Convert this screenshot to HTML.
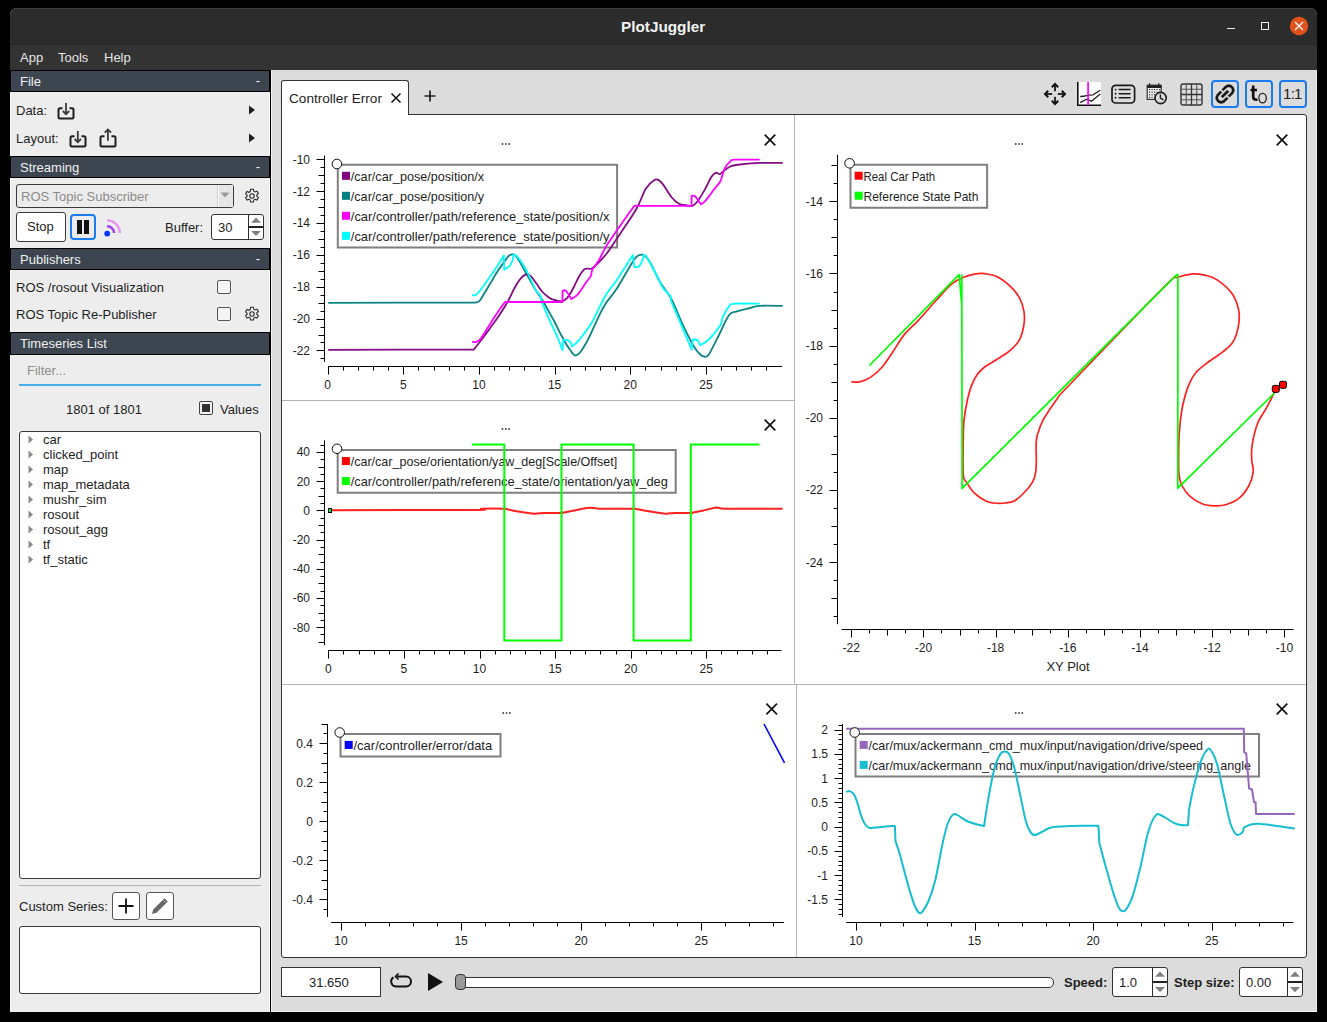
<!DOCTYPE html>
<html><head><meta charset="utf-8">
<style>
html,body{margin:0;padding:0}
body{width:1327px;height:1022px;background:#000;position:relative;overflow:hidden;font-family:"Liberation Sans",sans-serif;font-size:13px;color:#1e1e1e}
.a{position:absolute;white-space:pre}
.hdr{position:absolute;left:10px;width:258px;height:20px;background:#3d4650;border:1px solid #000;color:#f0f0f0;font-size:13px}
.hdr span{position:absolute;left:9px;top:3px}
.hdr b{position:absolute;right:9px;top:2px;font-weight:normal}
.box{position:absolute;background:#fff;border:1px solid #3a3a3a;border-radius:3px;box-sizing:border-box}
.pane{position:absolute;background:#fff;box-sizing:border-box}
</style></head><body>
<!-- window -->
<div class="a" style="left:10px;top:8px;width:1307px;height:1004px;background:#dcdcdc;border-radius:7px 7px 0 0;overflow:hidden">
  <div class="a" style="left:0;top:0;width:1307px;height:37px;background:#2c2c2c;border-top:1px solid #3f3f3f;box-sizing:border-box"></div>
  <div class="a" style="left:0;top:37px;width:1307px;height:25px;background:#333"></div>
  <div class="a" style="left:0;top:36px;width:1307px;height:1px;background:#262626"></div>
  <div class="a" style="left:1306px;top:62px;width:1px;height:942px;background:#ececec"></div>
  <div class="a" style="left:0;top:1003px;width:1307px;height:1px;background:#f4f4f4"></div>
</div>
<!-- title -->
<div class="a" style="left:621px;top:18px;font-size:15.3px;font-weight:bold;color:#f2f2f2">PlotJuggler</div>
<div class="a" style="left:1227px;top:28px;width:8px;height:1.2px;background:#eee"></div>
<div class="a" style="left:1261px;top:22px;width:8px;height:8px;border:1.2px solid #f0f0f0;box-sizing:border-box"></div>
<svg class="a" style="left:1289px;top:16px" width="20" height="20"><circle cx="10" cy="10" r="9.2" fill="#e0521c"/><path d="M6 6L14 14M14 6L6 14" stroke="#fff" stroke-width="1.3"/></svg>
<!-- menu -->
<div class="a" style="left:20px;top:50px;color:#e6e6e6">App</div>
<div class="a" style="left:58px;top:50px;color:#e6e6e6">Tools</div>
<div class="a" style="left:104px;top:50px;color:#e6e6e6">Help</div>

<!-- left panel -->
<div class="a" style="left:10px;top:70px;width:260px;height:942px;background:#ededed"></div>
<div class="a" style="left:10px;top:70px;width:1px;height:942px;background:#fafafa"></div>
<div class="a" style="left:269px;top:70px;width:1px;height:942px;background:#fafafa"></div>
<div class="a" style="left:270px;top:70px;width:1px;height:942px;background:#000"></div>
<div class="a" style="left:271px;top:70px;width:1px;height:942px;background:#f0f0f0"></div>

<div class="hdr" style="top:70px"><span>File</span><b>-</b></div>
<div class="hdr" style="top:156px"><span>Streaming</span><b>-</b></div>
<div class="hdr" style="top:248px"><span>Publishers</span><b>-</b></div>
<div class="hdr" style="top:332px;height:21px"><span>Timeseries List</span></div>


<!-- File section -->
<div class="a" style="left:16px;top:103px">Data:</div>
<svg class="a" style="left:56px;top:102px" width="20" height="20"><path d="M6.5 6.2H4Q2.5 6.2 2.5 7.7V15.1Q2.5 16.6 4 16.6H16Q17.5 16.6 17.5 15.1V7.7Q17.5 6.2 16 6.2H13.5" fill="none" stroke="#1e1e1e" stroke-width="2"/><path d="M10 1V12.2M6.8 9L10 12.2L13.2 9" fill="none" stroke="#3a3a3a" stroke-width="1.8"/></svg>
<svg class="a" style="left:248px;top:105px" width="8" height="10"><path d="M1 0.5L7 5L1 9.5Z" fill="#1e1e1e"/></svg>
<div class="a" style="left:16px;top:131px">Layout:</div>
<svg class="a" style="left:68px;top:130px" width="20" height="20"><path d="M6.5 6.2H4Q2.5 6.2 2.5 7.7V15.1Q2.5 16.6 4 16.6H16Q17.5 16.6 17.5 15.1V7.7Q17.5 6.2 16 6.2H13.5" fill="none" stroke="#1e1e1e" stroke-width="2"/><path d="M9.8 1V12.2M6.6 9L9.8 12.2L13 9" fill="none" stroke="#3a3a3a" stroke-width="1.8"/></svg>
<svg class="a" style="left:98px;top:128px" width="20" height="21"><path d="M6.5 8.2H4Q2.5 8.2 2.5 9.7V17.1Q2.5 18.6 4 18.6H16Q17.5 18.6 17.5 17.1V9.7Q17.5 8.2 16 8.2H13.5" fill="none" stroke="#1e1e1e" stroke-width="2"/><path d="M9.9 12.7V1.6M6.7 4.6L9.9 1.4L13.1 4.6" fill="none" stroke="#3a3a3a" stroke-width="1.8"/></svg>
<svg class="a" style="left:248px;top:133px" width="8" height="10"><path d="M1 0.5L7 5L1 9.5Z" fill="#1e1e1e"/></svg>

<!-- Streaming section -->
<div class="a" style="left:16px;top:184px;width:218px;height:24px;background:#ececec;border:1px solid #3a3a3a;border-radius:3px;box-sizing:border-box"></div>
<div class="a" style="left:217px;top:185px;width:1px;height:22px;background:#d0d0d0"></div>
<div class="a" style="left:218px;top:185px;width:15px;height:22px;background:#e6e6e6;border-left:1px solid #fafafa;box-sizing:border-box"></div>
<svg class="a" style="left:220px;top:192px" width="10" height="6"><path d="M0.5 0.5H9.5L5 5.5Z" fill="#9a9a9a"/></svg>
<div class="a" style="left:21px;top:189px;color:#8c8c8c">ROS Topic Subscriber</div>
<svg class="a" style="left:244px;top:188px" width="16" height="16" viewBox="0 0 16 16"><path d="M6.6 1.2h2.8l.4 2 1.3.7 1.9-.8 1.4 2.4-1.5 1.3v1.6l1.5 1.3-1.4 2.4-1.9-.8-1.3.7-.4 2H6.6l-.4-2-1.3-.7-1.9.8-1.4-2.4 1.5-1.3V7.2L1.6 5.9 3 3.5l1.9.8 1.3-.7z" fill="none" stroke="#2a2a2a" stroke-width="1.1"/><circle cx="8" cy="8" r="2.2" fill="none" stroke="#2a2a2a" stroke-width="1.1"/></svg>
<div class="box" style="left:16px;top:212px;width:50px;height:30px"></div>
<div class="a" style="left:27px;top:219px">Stop</div>
<div class="a" style="left:70px;top:214px;width:26px;height:26px;border:2px solid #1a7cf0;border-radius:4px;box-sizing:border-box;background:#ececec"></div>
<div class="a" style="left:77px;top:220px;width:5px;height:14px;background:#111"></div>
<div class="a" style="left:84px;top:220px;width:4.6px;height:14px;background:#111"></div>
<svg class="a" style="left:98px;top:212px" width="28" height="28"><circle cx="9.2" cy="21.6" r="2.9" fill="#0033ff"/><path d="M9.1 14.2A6.9 6.9 0 0 1 16 21.1" fill="none" stroke="#a040e8" stroke-width="2.4"/><path d="M9.1 8.4A12.7 12.7 0 0 1 21.8 21.1" fill="none" stroke="#e890f5" stroke-width="2.4"/></svg>
<div class="a" style="left:165px;top:220px">Buffer:</div>
<div class="box" style="left:211px;top:214px;width:53px;height:26px;border-color:#333"></div>
<div class="a" style="left:248px;top:215px;width:1px;height:24px;background:#2a2a2a"></div>
<div class="a" style="left:249px;top:226px;width:14px;height:1.6px;background:#222"></div>
<svg class="a" style="left:250px;top:215px" width="12" height="24"><path d="M1 7.8H11L6 2.4Z" fill="#808080"/><path d="M1 16H11L6 21.1Z" fill="#808080"/></svg>
<div class="a" style="left:218px;top:220px">30</div>

<!-- Publishers -->
<div class="a" style="left:16px;top:280px">ROS /rosout Visualization</div>
<div class="a" style="left:217px;top:280px;width:14px;height:14px;border:1px solid #555;border-radius:2px;box-sizing:border-box;background:#f4f4f4"></div>
<div class="a" style="left:16px;top:307px">ROS Topic Re-Publisher</div>
<div class="a" style="left:217px;top:307px;width:14px;height:14px;border:1px solid #555;border-radius:2px;box-sizing:border-box;background:#f4f4f4"></div>
<svg class="a" style="left:244px;top:306px" width="16" height="16" viewBox="0 0 16 16"><path d="M6.6 1.2h2.8l.4 2 1.3.7 1.9-.8 1.4 2.4-1.5 1.3v1.6l1.5 1.3-1.4 2.4-1.9-.8-1.3.7-.4 2H6.6l-.4-2-1.3-.7-1.9.8-1.4-2.4 1.5-1.3V7.2L1.6 5.9 3 3.5l1.9.8 1.3-.7z" fill="none" stroke="#2a2a2a" stroke-width="1.1"/><circle cx="8" cy="8" r="2.2" fill="none" stroke="#2a2a2a" stroke-width="1.1"/></svg>

<!-- Timeseries -->
<div class="a" style="left:27px;top:363px;color:#8e8e8e">Filter...</div>
<div class="a" style="left:19px;top:384px;width:242px;height:2px;background:#48aee6"></div>
<div class="a" style="left:66px;top:402px">1801 of 1801</div>
<div class="a" style="left:199px;top:401px;width:14px;height:14px;border:1px solid #444;border-radius:2px;box-sizing:border-box;background:#f4f4f4"></div>
<div class="a" style="left:202px;top:404px;width:8px;height:8px;background:#333"></div>
<div class="a" style="left:220px;top:402px">Values</div>
<div class="box" style="left:19px;top:431px;width:242px;height:448px"></div>
<svg class="a" style="left:28px;top:435px" width="6" height="9"><path d="M0.5 0.5L5 4.5L0.5 8.5Z" fill="#8a8a8a"/></svg><div class="a" style="left:43px;top:432px">car</div>
<svg class="a" style="left:28px;top:450px" width="6" height="9"><path d="M0.5 0.5L5 4.5L0.5 8.5Z" fill="#8a8a8a"/></svg><div class="a" style="left:43px;top:447px">clicked_point</div>
<svg class="a" style="left:28px;top:465px" width="6" height="9"><path d="M0.5 0.5L5 4.5L0.5 8.5Z" fill="#8a8a8a"/></svg><div class="a" style="left:43px;top:462px">map</div>
<svg class="a" style="left:28px;top:480px" width="6" height="9"><path d="M0.5 0.5L5 4.5L0.5 8.5Z" fill="#8a8a8a"/></svg><div class="a" style="left:43px;top:477px">map_metadata</div>
<svg class="a" style="left:28px;top:495px" width="6" height="9"><path d="M0.5 0.5L5 4.5L0.5 8.5Z" fill="#8a8a8a"/></svg><div class="a" style="left:43px;top:492px">mushr_sim</div>
<svg class="a" style="left:28px;top:510px" width="6" height="9"><path d="M0.5 0.5L5 4.5L0.5 8.5Z" fill="#8a8a8a"/></svg><div class="a" style="left:43px;top:507px">rosout</div>
<svg class="a" style="left:28px;top:525px" width="6" height="9"><path d="M0.5 0.5L5 4.5L0.5 8.5Z" fill="#8a8a8a"/></svg><div class="a" style="left:43px;top:522px">rosout_agg</div>
<svg class="a" style="left:28px;top:540px" width="6" height="9"><path d="M0.5 0.5L5 4.5L0.5 8.5Z" fill="#8a8a8a"/></svg><div class="a" style="left:43px;top:537px">tf</div>
<svg class="a" style="left:28px;top:555px" width="6" height="9"><path d="M0.5 0.5L5 4.5L0.5 8.5Z" fill="#8a8a8a"/></svg><div class="a" style="left:43px;top:552px">tf_static</div>

<div class="a" style="left:19px;top:885px;width:242px;height:1px;background:#b4b4b4"></div>
<div class="a" style="left:19px;top:899px">Custom Series:</div>
<div class="box" style="left:112px;top:892px;width:28px;height:28px;border-color:#555"></div>
<svg class="a" style="left:112px;top:892px" width="28" height="28"><path d="M14 6.5V21.5M6.5 14H21.5" stroke="#111" stroke-width="1.8"/></svg>
<div class="box" style="left:146px;top:892px;width:28px;height:28px;border-color:#555"></div>
<svg class="a" style="left:146px;top:892px" width="28" height="28"><path d="M6 22L7.2 17.5L18.5 6.2L21.8 9.5L10.5 20.8Z" fill="#666"/><path d="M17.8 8.5L19.6 10.3" stroke="#fff" stroke-width="0.8"/></svg>
<div class="box" style="left:19px;top:926px;width:242px;height:68px"></div>

<!-- main area: tab -->
<div class="a" style="left:281px;top:80px;width:128px;height:36px;background:#fff;border:1px solid #333;border-bottom:none;border-radius:3px 3px 0 0;box-sizing:border-box"></div>
<div class="a" style="left:289px;top:91px;font-size:13.6px">Controller Error</div>
<svg class="a" style="left:390px;top:92px" width="12" height="12"><path d="M1.5 1.5L10.5 10.5M10.5 1.5L1.5 10.5" stroke="#111" stroke-width="1.5"/></svg>
<svg class="a" style="left:423px;top:89px" width="14" height="14"><path d="M7 1.5V12.5M1.5 7H12.5" stroke="#222" stroke-width="1.7"/></svg>
<!-- pane container -->
<div class="a" style="left:281px;top:114px;width:1026px;height:844px;background:#fff;border:1px solid #333;border-radius:0 3px 3px 3px;box-sizing:border-box"></div>
<div class="a" style="left:282px;top:114px;width:126px;height:1px;background:#fff"></div>
<div class="a" style="left:794px;top:115px;width:1px;height:570px;background:#b4b4b4"></div>
<div class="a" style="left:282px;top:400px;width:512px;height:1px;background:#b4b4b4"></div>
<div class="a" style="left:282px;top:684px;width:1024px;height:1px;background:#b4b4b4"></div>
<div class="a" style="left:796px;top:685px;width:1px;height:272px;background:#b4b4b4"></div>

<!-- toolbar -->
<svg class="a" style="left:1043px;top:82px" width="24" height="24"><path d="M12 3V9.2M12 14.8V21M3 12H9.2M14.8 12H21" stroke="#2a2a2a" stroke-width="2"/><path d="M8.8 5.2L12 2L15.2 5.2M8.8 18.8L12 22L15.2 18.8M5.2 8.8L2 12L5.2 15.2M18.8 8.8L22 12L18.8 15.2" fill="none" stroke="#111" stroke-width="2" stroke-linejoin="miter"/></svg>
<svg class="a" style="left:1077px;top:82px" width="24" height="24"><rect x="0" y="0" width="24" height="24" fill="#fff"/><path d="M0.8 0V23.2H24" fill="none" stroke="#111" stroke-width="1.6"/><path d="M3.2 14.5Q7 14.4 9.5 13.6T16 12.8L23.3 8.3" fill="none" stroke="#222" stroke-width="1.3"/><path d="M3.2 20.6L9.6 17.2L14.5 19.2L23.3 12" fill="none" stroke="#222" stroke-width="1.3"/><path d="M11.1 0V23" stroke="#f0f" stroke-width="1.7"/></svg>
<svg class="a" style="left:1110px;top:84px" width="26" height="21"><rect x="2" y="1.4" width="22.6" height="17.6" rx="3.6" fill="none" stroke="#1a1a1a" stroke-width="1.7"/><circle cx="5.6" cy="5.6" r="0.95" fill="#1a1a1a"/><circle cx="5.6" cy="9.7" r="0.95" fill="#1a1a1a"/><circle cx="5.6" cy="13.8" r="0.95" fill="#1a1a1a"/><path d="M9.2 5.6H20M9.2 9.7H20M9.2 13.8H20" stroke="#1a1a1a" stroke-width="1.5" stroke-linecap="round"/></svg>
<svg class="a" style="left:1146px;top:82px" width="24" height="24"><rect x="1.2" y="3.2" width="14" height="14.2" fill="#f0f0f0" stroke="#222" stroke-width="1.1"/><rect x="1.2" y="3.2" width="14" height="2.8" fill="#222"/><path d="M3.6 1.3V4.6M12.8 1.3V4.6" stroke="#222" stroke-width="1.2"/><g fill="#333"><rect x="3.0" y="7.0" width="1.2" height="1.2"/><rect x="5.5" y="7.0" width="1.2" height="1.2"/><rect x="8.0" y="7.0" width="1.2" height="1.2"/><rect x="10.5" y="7.0" width="1.2" height="1.2"/><rect x="13.0" y="7.0" width="1.2" height="1.2"/><rect x="3.0" y="9.6" width="1.2" height="1.2"/><rect x="5.5" y="9.6" width="1.2" height="1.2"/><rect x="8.0" y="9.6" width="1.2" height="1.2"/><rect x="10.5" y="9.6" width="1.2" height="1.2"/><rect x="13.0" y="9.6" width="1.2" height="1.2"/><rect x="3.0" y="12.200000000000001" width="1.2" height="1.2"/><rect x="5.5" y="12.200000000000001" width="1.2" height="1.2"/><rect x="8.0" y="12.200000000000001" width="1.2" height="1.2"/><rect x="10.5" y="12.200000000000001" width="1.2" height="1.2"/><rect x="13.0" y="12.200000000000001" width="1.2" height="1.2"/><rect x="3.0" y="14.8" width="1.2" height="1.2"/><rect x="5.5" y="14.8" width="1.2" height="1.2"/><rect x="8.0" y="14.8" width="1.2" height="1.2"/><rect x="10.5" y="14.8" width="1.2" height="1.2"/><rect x="13.0" y="14.8" width="1.2" height="1.2"/></g><circle cx="14.6" cy="16" r="5.6" fill="#dcdcdc" stroke="#1a1a1a" stroke-width="1.6"/><path d="M14.4 12.6V16.2L17.4 17.8" fill="none" stroke="#1a1a1a" stroke-width="1.4"/></svg>
<svg class="a" style="left:1180px;top:83px" width="23" height="23"><rect x="1" y="1" width="21" height="21" rx="2" fill="none" stroke="#333" stroke-width="1.4"/><path d="M6.25 1V22M16.75 1V22M1 6.25H22M1 16.75H22" stroke="#555" stroke-width="1.1"/><path d="M11.5 1V22M1 11.5H22" stroke="#333" stroke-width="1.3"/></svg>
<div class="a" style="left:1211px;top:80px;width:28px;height:28px;border:2px solid #1a7cf0;border-radius:4px;box-sizing:border-box"></div>
<svg class="a" style="left:1211px;top:80px" width="28" height="28"><g transform="translate(14 14) rotate(-45) scale(1.08) translate(-12 -12)"><path d="M3.9 12c0-1.71 1.39-3.1 3.1-3.1h4V7H7c-2.76 0-5 2.24-5 5s2.24 5 5 5h4v-1.9H7c-1.71 0-3.1-1.39-3.1-3.1zM8 13h8v-2H8v2zm9-6h-4v1.9h4c1.71 0 3.1 1.39 3.1 3.1s-1.39 3.1-3.1 3.1h-4V17h4c2.76 0 5-2.24 5-5s-2.24-5-5-5z" fill="#111" stroke="#111" stroke-width="0.6"/></g></svg>
<div class="a" style="left:1245px;top:80px;width:28px;height:28px;border:2px solid #1a7cf0;border-radius:4px;box-sizing:border-box"></div>
<svg class="a" style="left:1245px;top:80px" width="28" height="28"><path d="M8.2 5.5V16.5Q8.2 19.8 11.5 19.8H12.5M5.5 10H12" fill="none" stroke="#111" stroke-width="2.6"/><ellipse cx="17.6" cy="18.1" rx="3.7" ry="4.8" fill="none" stroke="#222" stroke-width="1.3"/></svg>
<div class="a" style="left:1279px;top:80px;width:28px;height:28px;border:2px solid #1a7cf0;border-radius:4px;box-sizing:border-box"></div>
<div class="a" style="left:1283px;top:85px;font-size:15px;letter-spacing:-0.7px;color:#222">1:1</div>

<!-- bottom bar -->
<div class="a" style="left:281px;top:967px;width:100px;height:30px;background:#fff;border:1px solid #333;box-sizing:border-box"></div>
<div class="a" style="left:309px;top:975px">31.650</div>
<svg class="a" style="left:389px;top:973px" width="24" height="18"><path d="M8 3.5H17A5 5 0 0 1 17 13.5H7A5 5 0 0 1 4.5 4.3" fill="none" stroke="#111" stroke-width="2"/><path d="M9.5 0.5L6.5 3.5L9.5 6.5" fill="none" stroke="#111" stroke-width="1.6"/></svg>
<svg class="a" style="left:427px;top:972px" width="17" height="20"><path d="M1 1L16 10L1 19Z" fill="#111"/></svg>
<div class="a" style="left:456px;top:977px;width:598px;height:11px;background:#fff;border:1px solid #333;border-radius:5px;box-sizing:border-box"></div>
<div class="a" style="left:455px;top:974px;width:11px;height:16px;background:#9a9a9a;border:1px solid #333;border-radius:4px;box-sizing:border-box"></div>
<div class="a" style="left:1064px;top:975px;font-weight:bold">Speed:</div>
<div class="a" style="left:1112px;top:967px;width:56px;height:30px;background:#fff;border:1px solid #333;border-radius:3px;box-sizing:border-box"></div>
<div class="a" style="left:1152px;top:968px;width:1px;height:28px;background:#2a2a2a"></div>
<div class="a" style="left:1153px;top:981px;width:14px;height:1.8px;background:#222"></div>
<svg class="a" style="left:1153px;top:967px" width="14" height="30"><path d="M2 9.7H12L7 4.4Z" fill="#808080"/><path d="M2 20H12L7 25.2Z" fill="#808080"/></svg>
<div class="a" style="left:1119px;top:975px">1.0</div>
<div class="a" style="left:1174px;top:975px;font-weight:bold">Step size:</div>
<div class="box" style="left:1239px;top:967px;width:64px;height:30px;border-color:#333"></div>
<div class="a" style="left:1287px;top:968px;width:1px;height:28px;background:#2a2a2a"></div>
<div class="a" style="left:1288px;top:981px;width:14px;height:1.8px;background:#222"></div>
<svg class="a" style="left:1288px;top:967px" width="14" height="30"><path d="M2 9.7H12L7 4.4Z" fill="#808080"/><path d="M2 20H12L7 25.2Z" fill="#808080"/></svg>
<div class="a" style="left:1246px;top:975px">0.00</div>
<svg class="a" style="left:0;top:0" width="1327" height="1022" font-family="Liberation Sans">
<g fill="#333"><rect x="501.7" y="143.2" width="1.6" height="1.6"/><rect x="505.0" y="143.2" width="1.6" height="1.6"/><rect x="508.3" y="143.2" width="1.6" height="1.6"/></g>
<path d="M764.7 134.7L775.3 145.3M775.3 134.7L764.7 145.3" stroke="#111" stroke-width="1.7"/>
<path d="M337.8 247.4V164.8H617.1V247.4Z" fill="none" stroke="#7f7f7f" stroke-width="2"/>
<rect x="342.0" y="171.8" width="8" height="8" fill="#800080"/>
<text x="350.8" y="180.8" font-size="12.6" fill="#1e1e1e" textLength="133.3" lengthAdjust="spacingAndGlyphs">/car/car_pose/position/x</text>
<rect x="342.0" y="191.8" width="8" height="8" fill="#008080"/>
<text x="350.8" y="200.8" font-size="12.6" fill="#1e1e1e" textLength="133.3" lengthAdjust="spacingAndGlyphs">/car/car_pose/position/y</text>
<rect x="342.0" y="211.8" width="8" height="8" fill="#ff00ff"/>
<text x="350.8" y="220.8" font-size="12.6" fill="#1e1e1e" textLength="258.7" lengthAdjust="spacingAndGlyphs">/car/controller/path/reference_state/position/x</text>
<rect x="342.0" y="231.8" width="8" height="8" fill="#00ffff"/>
<text x="350.8" y="240.8" font-size="12.6" fill="#1e1e1e" textLength="258.7" lengthAdjust="spacingAndGlyphs">/car/controller/path/reference_state/position/y</text>
<path d="M328.2 302.8 C352.6 302.8 450.0 302.6 474.4 302.6 C475.2 302.4 477.5 302.8 479.1 301.4 C480.7 300.0 481.9 297.4 483.8 294.3 C485.8 291.2 488.5 286.5 490.8 282.6 C493.1 278.7 495.7 274.1 497.9 270.8 C500.1 267.5 502.0 265.0 503.8 262.6 C505.6 260.2 507.1 257.6 508.5 256.2 C509.9 254.8 510.8 254.5 512.0 254.4 C513.2 254.3 514.1 254.2 515.5 255.6 C516.9 257.0 518.4 259.7 520.2 262.6 C522.0 265.5 524.1 269.7 526.1 273.2 C528.1 276.7 530.0 280.5 532.0 283.8 C534.0 287.1 536.0 290.5 537.8 293.2 C539.5 295.9 540.7 297.3 542.5 300.2 C544.3 303.1 546.4 307.3 548.4 310.8 C550.4 314.3 552.3 317.6 554.3 321.3 C556.2 325.0 558.1 329.4 560.1 333.1 C562.1 336.8 564.2 340.8 566.0 343.7 C567.8 346.6 569.2 348.8 570.7 350.7 C572.2 352.6 573.4 354.9 574.8 355.4 C576.2 355.9 577.4 355.0 578.9 353.6 C580.4 352.2 581.8 350.0 583.6 347.2 C585.4 344.4 587.4 340.9 589.5 336.6 C591.6 332.3 594.0 326.6 596.5 321.3 C599.0 316.0 601.3 310.4 604.8 304.9 C608.2 299.3 612.3 295.6 617.2 288.0 C622.1 280.4 630.4 264.9 634.4 259.3 C638.4 253.8 639.6 255.2 641.5 254.7 C643.4 254.2 644.1 254.8 645.8 256.5 C647.5 258.2 649.1 260.7 651.5 265.0 C653.9 269.3 656.8 276.5 660.1 282.2 C663.5 287.9 667.8 292.2 671.6 299.4 C675.4 306.6 679.4 317.6 683.0 325.2 C686.6 332.8 690.2 340.3 693.1 345.2 C696.0 350.1 698.3 352.6 700.2 354.5 C702.1 356.4 703.1 356.7 704.5 356.7 C705.9 356.7 706.6 357.6 708.8 354.5 C710.9 351.4 714.0 344.7 717.4 338.1 C720.8 331.6 725.8 319.6 728.9 315.2 C732.0 310.8 732.9 312.7 736.0 311.6 C739.1 310.5 743.5 309.6 747.5 308.7 C751.5 307.8 753.9 306.4 759.7 305.9 C765.6 305.4 778.8 305.9 782.6 305.9" fill="none" stroke="#0c8484" stroke-width="1.8" stroke-linejoin="round"/>
<path d="M328.2 349.8 C352.5 349.8 449.5 349.6 473.8 349.6 C474.9 348.2 478.1 344.2 480.3 341.3 C482.6 338.4 484.2 336.2 487.3 331.9 C490.4 327.6 495.6 320.8 499.1 315.5 C502.6 310.2 506.0 304.7 508.5 300.2 C511.0 295.7 512.3 292.0 514.3 288.5 C516.2 285.0 518.2 281.5 520.2 279.1 C522.2 276.8 524.3 274.9 526.1 274.4 C527.9 273.9 529.0 274.5 530.8 276.1 C532.5 277.7 534.6 281.2 536.6 283.8 C538.6 286.4 540.3 289.6 542.5 292.0 C544.7 294.4 547.5 296.5 549.6 297.9 C551.8 299.3 553.2 299.7 555.4 300.2 C557.5 300.7 560.5 301.5 562.5 301.1 C564.5 300.7 565.4 300.0 567.2 297.9 C569.0 295.8 571.2 292.0 573.1 288.5 C575.0 285.0 577.0 279.9 578.9 276.7 C580.8 273.5 582.6 270.5 584.8 269.1 C586.9 267.7 589.5 269.6 591.8 268.5 C594.1 267.4 596.0 265.1 598.5 262.6 C601.0 260.2 603.1 258.2 606.5 253.8 C609.9 249.4 613.6 243.4 618.6 235.9 C623.6 228.4 632.0 216.6 636.5 208.7 C641.0 200.8 642.8 193.5 645.8 188.7 C648.8 183.9 652.2 181.5 654.4 180.1 C656.5 178.7 657.3 179.4 658.7 180.1 C660.1 180.8 660.9 181.5 663.0 184.4 C665.1 187.3 669.0 194.1 671.6 197.3 C674.2 200.5 676.4 202.4 678.8 203.7 C681.2 205.0 683.6 204.8 685.9 205.1 C688.2 205.4 690.5 206.4 692.4 205.8 C694.3 205.2 695.4 204.1 697.4 201.5 C699.4 198.9 702.1 194.3 704.5 190.1 C706.9 185.9 709.8 179.4 711.7 176.5 C713.6 173.6 714.7 173.0 716.0 172.6 C717.3 172.2 718.4 174.3 719.6 174.1 C720.8 173.9 721.6 172.7 723.1 171.5 C724.6 170.3 726.8 168.3 728.9 167.2 C731.0 166.1 731.0 165.7 736.0 165.0 C741.0 164.3 751.1 163.2 758.9 162.9 C766.7 162.6 778.6 162.9 782.6 162.9" fill="none" stroke="#840c84" stroke-width="1.8" stroke-linejoin="round"/>
<path d="M472.0 294.9 C472.7 294.9 474.4 296.0 476.2 294.7 C478.0 293.4 480.2 290.5 482.6 287.3 C485.0 284.1 488.2 279.2 490.8 275.5 C493.4 271.8 495.7 268.3 497.9 265.0 C500.1 261.7 502.8 257.2 503.8 255.6 C503.9 257.9 504.2 267.3 504.3 269.7 C505.2 269.1 508.2 267.7 509.6 266.1 C511.0 264.5 511.9 262.2 512.6 260.3 C513.3 258.4 513.5 255.4 513.7 254.4 C514.2 254.7 515.2 254.6 516.7 256.2 C518.2 257.8 520.7 260.8 522.6 263.8 C524.5 266.8 526.2 270.1 528.4 274.4 C530.5 278.7 533.5 286.1 535.5 289.6 C537.5 293.1 539.0 293.1 540.2 295.5 C541.4 297.9 540.9 299.6 542.5 303.7 C544.1 307.8 547.1 314.5 549.6 320.2 C552.1 325.9 555.6 332.8 557.8 337.8 C559.9 342.8 561.7 348.1 562.5 350.1 C562.6 348.4 563.2 341.8 563.4 340.1 C564.0 340.1 566.0 339.7 567.2 340.1 C568.4 340.5 569.9 341.4 570.7 342.5 C571.5 343.6 571.7 345.9 571.9 346.6 C573.1 345.5 575.6 344.1 578.9 340.1 C582.2 336.1 587.5 329.7 591.8 322.5 C596.1 315.3 600.6 303.9 604.8 296.7 C609.0 289.5 612.5 286.3 617.2 279.4 C621.9 272.4 630.3 259.1 632.9 255.0 C633.1 257.0 634.1 265.2 634.4 267.2 C635.1 267.1 637.4 267.6 638.7 266.5 C640.0 265.4 641.4 262.7 642.2 260.8 C643.0 258.9 643.5 256.0 643.7 255.0 C644.3 255.5 645.0 254.3 647.3 257.9 C649.6 261.5 654.7 271.5 657.3 276.5 C659.9 281.5 660.9 284.8 663.0 288.0 C665.1 291.2 668.8 293.4 670.2 295.8 C671.6 298.2 669.9 297.9 671.6 302.3 C673.3 306.7 676.9 314.4 680.2 322.3 C683.5 330.2 689.7 345.0 691.6 349.5 C691.8 347.8 692.6 341.2 692.8 339.5 C693.6 339.6 696.2 339.2 697.4 340.2 C698.6 341.1 699.7 344.4 700.2 345.2 C701.6 344.2 705.4 342.8 708.8 339.5 C712.1 336.2 718.0 328.8 720.3 325.2 C722.6 321.6 721.0 321.1 722.4 318.0 C723.8 314.9 726.9 309.0 728.9 306.6 C730.9 304.2 729.5 304.2 734.6 303.7 C739.7 303.2 755.5 303.7 759.7 303.7" fill="none" stroke="#00ffff" stroke-width="1.8" stroke-linejoin="round"/>
<path d="M472.0 341.9 C472.7 341.9 474.8 342.4 476.2 341.9 C477.6 341.4 478.4 341.2 480.3 339.0 C482.2 336.8 484.8 332.3 487.3 328.4 C489.8 324.5 492.6 319.9 495.5 315.5 C498.4 311.1 503.3 304.2 504.9 302.0 C514.5 302.0 552.9 302.0 562.5 302.0 C562.5 300.1 562.5 292.7 562.5 290.8 C563.1 290.8 564.5 289.4 566.0 290.8 C567.5 292.2 570.4 297.6 571.3 299.0 C572.4 298.2 575.3 297.0 577.8 294.3 C580.2 291.6 583.9 285.6 586.0 282.6 C588.1 279.6 589.6 278.2 590.7 276.1 C591.8 274.0 591.0 272.3 592.4 269.7 C593.8 267.1 596.6 264.2 598.9 260.3 C601.2 256.4 602.8 251.8 606.1 246.4 C609.4 241.0 614.2 234.4 618.6 228.0 C623.0 221.6 629.8 211.9 632.6 208.2 C635.4 204.5 634.3 206.2 635.2 205.8 C636.1 205.4 637.5 205.8 638.0 205.8 C646.9 205.8 682.7 205.8 691.6 205.8 C691.6 204.1 691.6 197.5 691.6 195.8 C692.2 195.9 693.7 195.1 695.2 196.5 C696.8 197.9 700.0 203.1 700.9 204.4 C701.8 203.7 703.7 202.7 706.0 200.1 C708.3 197.5 712.1 191.8 714.5 188.7 C716.9 185.6 718.6 184.8 720.3 181.5 C722.0 178.2 723.0 171.8 724.6 168.6 C726.2 165.4 727.9 163.7 729.6 162.2 C731.3 160.7 729.6 160.1 734.6 159.7 C739.6 159.3 755.5 159.7 759.7 159.7" fill="none" stroke="#ff00ff" stroke-width="1.8" stroke-linejoin="round"/>
<path d="M324.5 155.5V362" stroke="#000" stroke-width="1"/>
<path d="M320.5 358.5H324.5M316.5 350.5H324.5M320.5 342.5H324.5M318.5 335.5H324.5M320.5 327.5H324.5M316.5 319.5H324.5M320.5 311.5H324.5M318.5 303.5H324.5M320.5 295.5H324.5M316.5 287.5H324.5M320.5 279.5H324.5M318.5 271.5H324.5M320.5 263.5H324.5M316.5 255.5H324.5M320.5 247.5H324.5M318.5 239.5H324.5M320.5 231.5H324.5M316.5 223.5H324.5M320.5 215.5H324.5M318.5 207.5H324.5M320.5 199.5H324.5M316.5 191.5H324.5M320.5 183.5H324.5M318.5 175.5H324.5M320.5 167.5H324.5M316.5 159.5H324.5" stroke="#000" stroke-width="1"/>
<text x="310" y="163.7" text-anchor="end" font-size="12" fill="#1e1e1e">-10</text>
<text x="310" y="195.6" text-anchor="end" font-size="12" fill="#1e1e1e">-12</text>
<text x="310" y="227.4" text-anchor="end" font-size="12" fill="#1e1e1e">-14</text>
<text x="310" y="259.3" text-anchor="end" font-size="12" fill="#1e1e1e">-16</text>
<text x="310" y="291.1" text-anchor="end" font-size="12" fill="#1e1e1e">-18</text>
<text x="310" y="323.0" text-anchor="end" font-size="12" fill="#1e1e1e">-20</text>
<text x="310" y="354.9" text-anchor="end" font-size="12" fill="#1e1e1e">-22</text>
<path d="M328.2 366.5H782" stroke="#000" stroke-width="1"/>
<path d="M328.5 366.5V374.5M343.5 366.5V370.5M358.5 366.5V370.5M373.5 366.5V370.5M388.5 366.5V370.5M403.5 366.5V374.5M418.5 366.5V370.5M434.5 366.5V370.5M449.5 366.5V370.5M464.5 366.5V370.5M479.5 366.5V374.5M494.5 366.5V370.5M509.5 366.5V370.5M524.5 366.5V370.5M540.5 366.5V370.5M555.5 366.5V374.5M570.5 366.5V370.5M585.5 366.5V370.5M600.5 366.5V370.5M615.5 366.5V370.5M630.5 366.5V374.5M645.5 366.5V370.5M661.5 366.5V370.5M676.5 366.5V370.5M691.5 366.5V370.5M706.5 366.5V374.5M721.5 366.5V370.5M736.5 366.5V370.5M751.5 366.5V370.5M766.5 366.5V370.5" stroke="#000" stroke-width="1"/>
<text x="327.7" y="388.5" text-anchor="middle" font-size="12" fill="#1e1e1e">0</text>
<text x="403.4" y="388.5" text-anchor="middle" font-size="12" fill="#1e1e1e">5</text>
<text x="479.0" y="388.5" text-anchor="middle" font-size="12" fill="#1e1e1e">10</text>
<text x="554.6" y="388.5" text-anchor="middle" font-size="12" fill="#1e1e1e">15</text>
<text x="630.3" y="388.5" text-anchor="middle" font-size="12" fill="#1e1e1e">20</text>
<text x="706.0" y="388.5" text-anchor="middle" font-size="12" fill="#1e1e1e">25</text>
<g fill="#333"><rect x="501.7" y="428.2" width="1.6" height="1.6"/><rect x="505.0" y="428.2" width="1.6" height="1.6"/><rect x="508.3" y="428.2" width="1.6" height="1.6"/></g>
<path d="M764.7 419.7L775.3 430.3M775.3 419.7L764.7 430.3" stroke="#111" stroke-width="1.7"/>
<path d="M337.7 492.8V450H675.7V492.8Z" fill="none" stroke="#7f7f7f" stroke-width="2"/>
<rect x="341.9" y="457.0" width="8" height="8" fill="#ff0000"/>
<text x="350.7" y="466.0" font-size="12.6" fill="#1e1e1e" textLength="266.6" lengthAdjust="spacingAndGlyphs">/car/car_pose/orientation/yaw_deg[Scale/Offset]</text>
<rect x="341.9" y="477.0" width="8" height="8" fill="#00ff00"/>
<text x="350.7" y="486.0" font-size="12.6" fill="#1e1e1e" textLength="317.1" lengthAdjust="spacingAndGlyphs">/car/controller/path/reference_state/orientation/yaw_deg</text>
<path d="M330.3 510.2 C345.1 510.2 463.6 510.0 478.7 509.9 C493.8 509.8 478.6 508.8 481.1 508.7 C483.6 508.6 500.4 508.5 503.5 508.7 C506.6 508.9 510.1 510.0 512.2 510.4 C514.3 510.8 522.5 512.1 524.7 512.4 C526.9 512.7 532.6 513.7 534.6 513.7 C536.6 513.8 541.9 513.0 544.6 512.9 C547.3 512.8 559.0 513.1 562.0 512.9 C565.0 512.6 571.9 510.9 574.4 510.4 C576.9 509.9 584.8 508.1 586.8 507.9 C588.8 507.6 593.0 507.8 594.3 507.9 C595.5 508.0 595.3 508.6 599.3 508.7 C603.3 508.8 629.6 508.5 634.1 508.7 C638.6 508.9 641.8 510.0 644.0 510.4 C646.2 510.8 654.3 512.1 656.5 512.4 C658.7 512.7 664.7 513.7 666.4 513.7 C668.1 513.8 671.4 513.0 673.9 512.9 C676.4 512.8 688.3 513.1 691.3 512.9 C694.3 512.6 701.2 510.9 703.7 510.4 C706.2 509.8 714.1 507.6 716.2 507.4 C718.3 507.2 718.3 508.6 724.9 508.7 C731.5 508.8 776.8 508.7 782.6 508.7" fill="none" stroke="#ff2020" stroke-width="2.0" stroke-linejoin="round"/>
<path d="M472.1 444.6 L504.3 444.6 L504.3 640.6 L561.5 640.6 L561.5 444.6 L633.6 444.6 L633.6 640.6 L690.8 640.6 L690.8 444.6 L759.4 444.6" fill="none" stroke="#00ff00" stroke-width="2.0" stroke-linejoin="round"/>
<rect x="328.5" y="508.5" width="3" height="4" fill="#00ff00" stroke="#000" stroke-width="1"/>
<path d="M324.5 440.3V645.3" stroke="#000" stroke-width="1"/>
<path d="M318.5 642.5H324.5M320.5 634.5H324.5M316.5 627.5H324.5M320.5 620.5H324.5M318.5 613.5H324.5M320.5 605.5H324.5M316.5 598.5H324.5M320.5 591.5H324.5M318.5 583.5H324.5M320.5 576.5H324.5M316.5 569.5H324.5M320.5 562.5H324.5M318.5 554.5H324.5M320.5 547.5H324.5M316.5 540.5H324.5M320.5 532.5H324.5M318.5 525.5H324.5M320.5 518.5H324.5M316.5 510.5H324.5M320.5 503.5H324.5M318.5 496.5H324.5M320.5 488.5H324.5M316.5 481.5H324.5M320.5 474.5H324.5M318.5 467.5H324.5M320.5 459.5H324.5M316.5 452.5H324.5M320.5 445.5H324.5" stroke="#000" stroke-width="1"/>
<text x="310" y="456.4" text-anchor="end" font-size="12" fill="#1e1e1e">40</text>
<text x="310" y="485.6" text-anchor="end" font-size="12" fill="#1e1e1e">20</text>
<text x="310" y="514.8" text-anchor="end" font-size="12" fill="#1e1e1e">0</text>
<text x="310" y="544.0" text-anchor="end" font-size="12" fill="#1e1e1e">-20</text>
<text x="310" y="573.2" text-anchor="end" font-size="12" fill="#1e1e1e">-40</text>
<text x="310" y="602.4" text-anchor="end" font-size="12" fill="#1e1e1e">-60</text>
<text x="310" y="631.6" text-anchor="end" font-size="12" fill="#1e1e1e">-80</text>
<path d="M328.3 650.5H781.5" stroke="#000" stroke-width="1"/>
<path d="M328.5 650.5V658.5M343.5 650.5V654.5M359.5 650.5V654.5M374.5 650.5V654.5M389.5 650.5V654.5M404.5 650.5V658.5M419.5 650.5V654.5M434.5 650.5V654.5M449.5 650.5V654.5M464.5 650.5V654.5M480.5 650.5V658.5M495.5 650.5V654.5M510.5 650.5V654.5M525.5 650.5V654.5M540.5 650.5V654.5M555.5 650.5V658.5M570.5 650.5V654.5M585.5 650.5V654.5M600.5 650.5V654.5M616.5 650.5V654.5M631.5 650.5V658.5M646.5 650.5V654.5M661.5 650.5V654.5M676.5 650.5V654.5M691.5 650.5V654.5M706.5 650.5V658.5M721.5 650.5V654.5M737.5 650.5V654.5M752.5 650.5V654.5M767.5 650.5V654.5" stroke="#000" stroke-width="1"/>
<text x="328.3" y="672.5" text-anchor="middle" font-size="12" fill="#1e1e1e">0</text>
<text x="403.9" y="672.5" text-anchor="middle" font-size="12" fill="#1e1e1e">5</text>
<text x="479.5" y="672.5" text-anchor="middle" font-size="12" fill="#1e1e1e">10</text>
<text x="555.1" y="672.5" text-anchor="middle" font-size="12" fill="#1e1e1e">15</text>
<text x="630.7" y="672.5" text-anchor="middle" font-size="12" fill="#1e1e1e">20</text>
<text x="706.3" y="672.5" text-anchor="middle" font-size="12" fill="#1e1e1e">25</text>
<g fill="#333"><rect x="502.4" y="712.2" width="1.6" height="1.6"/><rect x="505.7" y="712.2" width="1.6" height="1.6"/><rect x="509.0" y="712.2" width="1.6" height="1.6"/></g>
<path d="M766.4000000000001 703.7L777.0 714.3M777.0 703.7L766.4000000000001 714.3" stroke="#111" stroke-width="1.7"/>
<path d="M340.5 756.6V733.9H500.5V756.6Z" fill="none" stroke="#7f7f7f" stroke-width="2"/>
<rect x="344.7" y="740.9" width="8" height="8" fill="#0000ff"/>
<text x="353.5" y="749.9" font-size="12.6" fill="#1e1e1e" textLength="138.7" lengthAdjust="spacingAndGlyphs">/car/controller/error/data</text>
<path d="M764.0 724.0 L784.5 762.8" fill="none" stroke="#0000ff" stroke-width="1.6" stroke-linejoin="round"/>
<path d="M327.5 724V917" stroke="#000" stroke-width="1"/>
<path d="M323.5 909.5H327.5M319.5 899.5H327.5M323.5 889.5H327.5M321.5 880.5H327.5M323.5 870.5H327.5M319.5 860.5H327.5M323.5 850.5H327.5M321.5 841.5H327.5M323.5 831.5H327.5M319.5 821.5H327.5M323.5 811.5H327.5M321.5 802.5H327.5M323.5 792.5H327.5M319.5 782.5H327.5M323.5 772.5H327.5M321.5 763.5H327.5M323.5 753.5H327.5M319.5 743.5H327.5M323.5 733.5H327.5M321.5 724.5H327.5" stroke="#000" stroke-width="1"/>
<text x="313" y="747.6" text-anchor="end" font-size="12" fill="#1e1e1e">0.4</text>
<text x="313" y="786.6" text-anchor="end" font-size="12" fill="#1e1e1e">0.2</text>
<text x="313" y="825.6" text-anchor="end" font-size="12" fill="#1e1e1e">0</text>
<text x="313" y="864.6" text-anchor="end" font-size="12" fill="#1e1e1e">-0.2</text>
<text x="313" y="903.6" text-anchor="end" font-size="12" fill="#1e1e1e">-0.4</text>
<path d="M331.2 922.5H784" stroke="#000" stroke-width="1"/>
<path d="M341.5 922.5V930.5M365.5 922.5V926.5M389.5 922.5V926.5M413.5 922.5V926.5M437.5 922.5V926.5M461.5 922.5V930.5M485.5 922.5V926.5M509.5 922.5V926.5M533.5 922.5V926.5M557.5 922.5V926.5M581.5 922.5V930.5M605.5 922.5V926.5M629.5 922.5V926.5M653.5 922.5V926.5M677.5 922.5V926.5M701.5 922.5V930.5M725.5 922.5V926.5M749.5 922.5V926.5M773.5 922.5V926.5" stroke="#000" stroke-width="1"/>
<text x="341.0" y="944.5" text-anchor="middle" font-size="12" fill="#1e1e1e">10</text>
<text x="461.1" y="944.5" text-anchor="middle" font-size="12" fill="#1e1e1e">15</text>
<text x="581.1" y="944.5" text-anchor="middle" font-size="12" fill="#1e1e1e">20</text>
<text x="701.2" y="944.5" text-anchor="middle" font-size="12" fill="#1e1e1e">25</text>
<g fill="#333"><rect x="1014.9" y="143.2" width="1.6" height="1.6"/><rect x="1018.2" y="143.2" width="1.6" height="1.6"/><rect x="1021.5" y="143.2" width="1.6" height="1.6"/></g>
<path d="M1276.7 134.7L1287.3 145.3M1287.3 134.7L1276.7 145.3" stroke="#111" stroke-width="1.7"/>
<path d="M850.5 207.8V164.7H987.1V207.8Z" fill="none" stroke="#7f7f7f" stroke-width="2"/>
<rect x="854.7" y="171.7" width="8" height="8" fill="#ff0000"/>
<text x="863.5" y="180.7" font-size="12.6" fill="#1e1e1e" textLength="71.7" lengthAdjust="spacingAndGlyphs">Real Car Path</text>
<rect x="854.7" y="191.7" width="8" height="8" fill="#00ff00"/>
<text x="863.5" y="200.7" font-size="12.6" fill="#1e1e1e" textLength="114.9" lengthAdjust="spacingAndGlyphs">Reference State Path</text>
<path d="M851.3 381.8 C852.7 381.8 856.5 382.5 859.6 381.8 C862.7 381.1 866.3 380.1 870.1 377.6 C873.9 375.1 878.4 371.3 882.2 367.0 C886.0 362.7 889.0 357.4 892.8 351.9 C896.6 346.4 900.5 339.2 904.8 333.9 C909.1 328.6 913.1 325.9 918.4 320.3 C923.7 314.7 931.0 306.0 936.5 300.0 C942.0 294.0 947.0 287.9 951.5 284.1 C956.0 280.3 959.6 279.0 963.6 277.3 C967.6 275.6 972.1 274.5 975.6 273.9 C979.1 273.3 981.2 273.2 984.7 273.6 C988.2 274.1 992.4 274.5 996.7 276.6 C1001.0 278.7 1006.5 282.9 1010.3 286.4 C1014.1 289.9 1017.1 293.6 1019.4 297.7 C1021.7 301.8 1023.1 306.7 1023.9 311.2 C1024.7 315.7 1024.7 320.0 1023.9 324.8 C1023.1 329.6 1021.7 335.6 1019.4 339.9 C1017.1 344.2 1014.1 347.1 1010.3 350.4 C1006.5 353.7 1001.0 356.7 996.7 359.5 C992.4 362.3 988.0 364.5 984.7 367.0 C981.5 369.5 979.5 371.2 977.2 374.5 C974.9 377.8 972.7 382.4 971.1 386.6 C969.5 390.9 968.6 394.5 967.4 400.0 C966.2 405.5 964.8 413.2 964.1 419.4 C963.4 425.6 963.4 427.8 963.3 437.0 C963.2 446.2 962.7 467.0 963.3 474.6 C963.9 482.2 965.2 479.8 967.0 482.8 C968.8 485.8 971.0 489.8 974.1 492.8 C977.2 495.8 982.7 499.3 985.8 501.0 C988.9 502.7 989.6 502.7 992.9 503.0 C996.2 503.3 1002.1 503.4 1005.8 503.0 C1009.5 502.6 1011.9 502.4 1015.2 500.4 C1018.5 498.4 1022.8 494.1 1025.7 491.0 C1028.6 487.9 1031.1 484.7 1032.8 481.6 C1034.5 478.5 1035.1 475.7 1035.7 472.2 C1036.3 468.7 1036.2 465.2 1036.3 460.5 C1036.4 455.8 1035.9 448.3 1036.1 444.0 C1036.3 439.7 1036.3 438.7 1037.5 434.6 C1038.7 430.5 1040.1 425.5 1043.4 419.4 C1046.7 413.3 1054.0 403.1 1057.5 398.2 C1061.0 393.3 1054.8 400.3 1064.5 390.0 C1074.2 379.7 1098.7 354.4 1116.0 336.5 C1133.3 318.6 1158.2 292.5 1168.5 282.6 C1178.8 272.7 1173.6 278.8 1177.6 277.3 C1181.6 275.9 1188.1 274.3 1192.6 273.9 C1197.1 273.5 1200.7 274.2 1204.7 275.1 C1208.7 276.1 1212.2 276.6 1216.7 279.6 C1221.2 282.6 1228.2 288.2 1231.8 293.2 C1235.4 298.2 1237.5 304.4 1238.6 309.7 C1239.7 315.0 1239.5 319.5 1238.6 324.8 C1237.7 330.1 1235.9 336.9 1233.3 341.4 C1230.7 345.9 1227.1 348.4 1222.8 351.9 C1218.5 355.4 1212.2 359.0 1207.7 362.5 C1203.2 366.0 1198.9 369.0 1195.6 373.0 C1192.3 377.0 1190.3 381.1 1188.1 386.6 C1185.9 392.1 1184.0 399.6 1182.6 406.0 C1181.2 412.4 1180.5 419.3 1179.9 425.2 C1179.3 431.1 1179.1 433.6 1178.9 441.6 C1178.7 449.6 1178.4 465.9 1178.9 473.2 C1179.4 480.5 1180.0 481.6 1181.9 485.5 C1183.8 489.4 1186.7 493.3 1190.1 496.4 C1193.5 499.5 1198.4 502.4 1202.5 504.0 C1206.6 505.6 1210.9 505.7 1214.8 505.8 C1218.7 505.9 1221.7 506.0 1225.8 504.7 C1229.9 503.4 1235.6 501.0 1239.5 497.8 C1243.4 494.6 1246.7 489.8 1249.0 485.5 C1251.3 481.2 1252.7 475.9 1253.2 471.8 C1253.7 467.7 1252.0 464.7 1251.8 460.8 C1251.6 456.9 1251.3 453.1 1251.8 448.5 C1252.2 443.9 1253.4 438.0 1254.5 433.4 C1255.6 428.8 1256.5 425.4 1258.6 421.1 C1260.6 416.8 1264.3 412.0 1266.8 407.4 C1269.3 402.8 1272.2 396.7 1273.7 393.7 C1275.2 390.7 1275.5 390.3 1275.8 389.6" fill="none" stroke="#ff2020" stroke-width="1.7" stroke-linejoin="round"/>
<path d="M869.4 365.5 L959.1 274.6 L961.8 305.0 L961.8 275.0 L962.1 488.4 L1176.8 274.6 L1177.9 274.6 L1177.8 488.2 L1274.4 393.0" fill="none" stroke="#00ff00" stroke-width="1.7" stroke-linejoin="round"/>
<rect x="1272.3" y="385.4" width="7" height="7" rx="1.8" fill="#ff0000" stroke="#000" stroke-width="1"/>
<rect x="1279.5" y="381.3" width="7" height="7" rx="1.8" fill="#ff0000" stroke="#000" stroke-width="1"/>
<path d="M837.5 154.8V624.2" stroke="#000" stroke-width="1"/>
<path d="M833.5 616.5H837.5M831.5 598.5H837.5M833.5 580.5H837.5M829.5 562.5H837.5M833.5 544.5H837.5M831.5 526.5H837.5M833.5 508.5H837.5M829.5 490.5H837.5M833.5 472.5H837.5M831.5 454.5H837.5M833.5 436.5H837.5M829.5 418.5H837.5M833.5 400.5H837.5M831.5 382.5H837.5M833.5 364.5H837.5M829.5 346.5H837.5M833.5 328.5H837.5M831.5 310.5H837.5M833.5 292.5H837.5M829.5 273.5H837.5M833.5 255.5H837.5M831.5 237.5H837.5M833.5 219.5H837.5M829.5 201.5H837.5M833.5 183.5H837.5M831.5 165.5H837.5" stroke="#000" stroke-width="1"/>
<text x="823" y="205.7" text-anchor="end" font-size="12" fill="#1e1e1e">-14</text>
<text x="823" y="277.9" text-anchor="end" font-size="12" fill="#1e1e1e">-16</text>
<text x="823" y="350.0" text-anchor="end" font-size="12" fill="#1e1e1e">-18</text>
<text x="823" y="422.2" text-anchor="end" font-size="12" fill="#1e1e1e">-20</text>
<text x="823" y="494.3" text-anchor="end" font-size="12" fill="#1e1e1e">-22</text>
<text x="823" y="566.5" text-anchor="end" font-size="12" fill="#1e1e1e">-24</text>
<path d="M841.5 629.5H1293.6" stroke="#000" stroke-width="1"/>
<path d="M851.5 629.5V637.5M869.5 629.5V633.5M887.5 629.5V635.5M905.5 629.5V633.5M923.5 629.5V637.5M941.5 629.5V633.5M960.5 629.5V635.5M978.5 629.5V633.5M996.5 629.5V637.5M1014.5 629.5V633.5M1032.5 629.5V635.5M1050.5 629.5V633.5M1068.5 629.5V637.5M1086.5 629.5V633.5M1104.5 629.5V635.5M1122.5 629.5V633.5M1140.5 629.5V637.5M1158.5 629.5V633.5M1176.5 629.5V635.5M1194.5 629.5V633.5M1212.5 629.5V637.5M1230.5 629.5V633.5M1248.5 629.5V635.5M1266.5 629.5V633.5M1284.5 629.5V637.5" stroke="#000" stroke-width="1"/>
<text x="851.2" y="651.9" text-anchor="middle" font-size="12" fill="#1e1e1e">-22</text>
<text x="923.4" y="651.9" text-anchor="middle" font-size="12" fill="#1e1e1e">-20</text>
<text x="995.6" y="651.9" text-anchor="middle" font-size="12" fill="#1e1e1e">-18</text>
<text x="1067.8" y="651.9" text-anchor="middle" font-size="12" fill="#1e1e1e">-16</text>
<text x="1140.0" y="651.9" text-anchor="middle" font-size="12" fill="#1e1e1e">-14</text>
<text x="1212.2" y="651.9" text-anchor="middle" font-size="12" fill="#1e1e1e">-12</text>
<text x="1284.4" y="651.9" text-anchor="middle" font-size="12" fill="#1e1e1e">-10</text>
<text x="1068" y="671" text-anchor="middle" font-size="13" fill="#1e1e1e">XY Plot</text>
<g fill="#333"><rect x="1014.9" y="712.2" width="1.6" height="1.6"/><rect x="1018.2" y="712.2" width="1.6" height="1.6"/><rect x="1021.5" y="712.2" width="1.6" height="1.6"/></g>
<path d="M1276.7 703.7L1287.3 714.3M1287.3 703.7L1276.7 714.3" stroke="#111" stroke-width="1.7"/>
<path d="M855.5 776.4V733.9H1259V776.4Z" fill="none" stroke="#7f7f7f" stroke-width="2"/>
<rect x="859.7" y="740.9" width="8" height="8" fill="#9467bd"/>
<text x="868.5" y="749.9" font-size="12.6" fill="#1e1e1e" textLength="334.6" lengthAdjust="spacingAndGlyphs">/car/mux/ackermann_cmd_mux/input/navigation/drive/speed</text>
<rect x="859.7" y="760.9" width="8" height="8" fill="#17becf"/>
<text x="868.5" y="769.9" font-size="12.6" fill="#1e1e1e" textLength="382.4" lengthAdjust="spacingAndGlyphs">/car/mux/ackermann_cmd_mux/input/navigation/drive/steering_angle</text>
<path d="M846.2 728.8 L1243.8 728.8 L1244.2 752.3 L1246.2 753.3 L1249.1 788.5 L1252.0 789.5 L1254.0 802.2 L1255.6 802.2 L1256.0 814.0 L1294.7 814.0" fill="none" stroke="#9467bd" stroke-width="2.0" stroke-linejoin="round"/>
<path d="M846.2 792.0 C846.8 791.9 848.4 790.7 849.7 791.1 C851.0 791.5 852.8 792.6 854.1 794.6 C855.4 796.6 856.4 799.9 857.6 803.4 C858.8 806.9 859.9 812.3 861.1 815.7 C862.3 819.1 863.4 821.7 864.7 823.7 C866.0 825.7 866.8 827.1 869.1 827.7 C871.4 828.3 875.0 827.5 878.7 827.2 C882.4 826.9 888.4 826.2 891.1 826.0 C893.8 825.8 894.3 826.0 894.9 826.0 C895.0 828.5 895.4 838.8 895.5 841.3 C896.2 843.5 898.0 847.9 899.9 854.5 C901.8 861.1 904.5 872.7 906.9 880.9 C909.2 889.1 912.1 898.6 914.0 903.8 C915.9 909.0 917.1 910.8 918.4 912.2 C919.7 913.6 920.3 913.9 921.9 912.2 C923.5 910.5 925.9 907.2 928.1 902.0 C930.3 896.8 932.8 890.3 935.1 880.9 C937.4 871.5 940.1 855.1 942.1 845.7 C944.1 836.3 945.6 829.6 947.4 824.5 C949.2 819.4 951.1 816.5 952.7 814.9 C954.3 813.3 954.8 813.9 957.1 814.9 C959.5 815.9 963.4 819.4 966.8 821.0 C970.2 822.6 974.5 823.7 977.4 824.5 C980.3 825.3 983.0 825.8 984.1 826.0 C984.3 824.6 985.1 818.9 985.3 817.5 C986.0 813.1 988.1 799.6 989.7 791.1 C991.3 782.6 993.2 772.6 995.0 766.4 C996.8 760.2 998.7 756.6 1000.3 754.1 C1001.9 751.6 1003.2 751.4 1004.7 751.4 C1006.2 751.4 1007.5 751.3 1009.1 754.1 C1010.7 756.9 1012.5 761.2 1014.4 768.2 C1016.3 775.2 1018.6 787.6 1020.5 796.4 C1022.4 805.2 1024.2 815.1 1025.8 821.0 C1027.4 826.9 1028.7 829.2 1030.2 831.6 C1031.7 834.0 1032.5 835.1 1034.6 835.1 C1036.6 835.1 1039.7 832.9 1042.5 831.6 C1045.3 830.3 1046.7 828.4 1051.3 827.5 C1055.9 826.6 1064.9 826.4 1070.0 826.1 C1075.1 825.8 1077.0 825.8 1081.7 825.7 C1086.4 825.6 1095.6 825.7 1098.4 825.7 C1098.6 828.6 1099.2 840.4 1099.4 843.3 C1100.4 846.9 1102.9 856.6 1105.2 864.8 C1107.5 872.9 1110.8 885.0 1113.1 892.2 C1115.4 899.4 1117.4 904.8 1118.9 907.9 C1120.4 911.0 1120.8 910.5 1121.9 910.8 C1123.1 911.1 1124.0 912.3 1125.8 909.9 C1127.6 907.5 1130.1 903.4 1132.6 896.2 C1135.0 889.0 1137.9 877.6 1140.5 866.8 C1143.1 856.0 1145.7 840.2 1148.3 831.6 C1150.9 823.0 1153.5 817.4 1156.1 814.9 C1158.7 812.4 1161.1 815.6 1164.0 816.9 C1166.9 818.2 1170.8 821.4 1173.7 822.8 C1176.6 824.2 1179.2 824.7 1181.6 825.1 C1184.0 825.5 1186.9 825.1 1188.0 825.1 C1188.2 822.6 1188.8 812.5 1189.0 810.0 C1189.7 806.4 1191.4 796.3 1193.3 788.5 C1195.2 780.7 1197.9 769.6 1200.2 763.1 C1202.5 756.6 1205.2 751.9 1207.0 749.8 C1208.8 747.7 1209.3 748.1 1210.9 750.3 C1212.5 752.5 1214.5 755.1 1216.8 763.1 C1219.1 771.1 1222.3 788.2 1224.6 798.3 C1226.9 808.4 1228.5 817.7 1230.5 823.7 C1232.5 829.7 1234.5 833.0 1236.4 834.5 C1238.4 836.0 1241.0 833.6 1242.2 832.5 C1243.4 831.4 1243.5 828.5 1243.8 827.7 C1244.8 827.2 1247.6 825.4 1250.1 824.7 C1252.6 824.0 1254.7 823.5 1258.9 823.7 C1263.1 823.9 1269.5 824.9 1275.5 825.7 C1281.5 826.5 1291.5 828.1 1294.7 828.6" fill="none" stroke="#17becf" stroke-width="2.0" stroke-linejoin="round"/>
<path d="M842.5 724V917" stroke="#000" stroke-width="1"/>
<path d="M838.5 914.5H842.5M838.5 909.5H842.5M838.5 904.5H842.5M834.5 899.5H842.5M838.5 894.5H842.5M838.5 890.5H842.5M838.5 885.5H842.5M838.5 880.5H842.5M834.5 875.5H842.5M838.5 870.5H842.5M838.5 865.5H842.5M838.5 861.5H842.5M838.5 856.5H842.5M834.5 851.5H842.5M838.5 846.5H842.5M838.5 841.5H842.5M838.5 836.5H842.5M838.5 831.5H842.5M834.5 827.5H842.5M838.5 822.5H842.5M838.5 817.5H842.5M838.5 812.5H842.5M838.5 807.5H842.5M834.5 802.5H842.5M838.5 798.5H842.5M838.5 793.5H842.5M838.5 788.5H842.5M838.5 783.5H842.5M834.5 778.5H842.5M838.5 773.5H842.5M838.5 768.5H842.5M838.5 764.5H842.5M838.5 759.5H842.5M834.5 754.5H842.5M838.5 749.5H842.5M838.5 744.5H842.5M838.5 739.5H842.5M838.5 734.5H842.5M834.5 730.5H842.5M838.5 725.5H842.5" stroke="#000" stroke-width="1"/>
<text x="828" y="734.0" text-anchor="end" font-size="12" fill="#1e1e1e">2</text>
<text x="828" y="758.2" text-anchor="end" font-size="12" fill="#1e1e1e">1.5</text>
<text x="828" y="782.5" text-anchor="end" font-size="12" fill="#1e1e1e">1</text>
<text x="828" y="806.8" text-anchor="end" font-size="12" fill="#1e1e1e">0.5</text>
<text x="828" y="831.0" text-anchor="end" font-size="12" fill="#1e1e1e">0</text>
<text x="828" y="855.2" text-anchor="end" font-size="12" fill="#1e1e1e">-0.5</text>
<text x="828" y="879.5" text-anchor="end" font-size="12" fill="#1e1e1e">-1</text>
<text x="828" y="903.8" text-anchor="end" font-size="12" fill="#1e1e1e">-1.5</text>
<path d="M846.2 922.5H1293.3" stroke="#000" stroke-width="1"/>
<path d="M856.5 922.5V930.5M880.5 922.5V926.5M903.5 922.5V926.5M927.5 922.5V926.5M951.5 922.5V926.5M975.5 922.5V930.5M998.5 922.5V926.5M1022.5 922.5V926.5M1046.5 922.5V926.5M1069.5 922.5V926.5M1093.5 922.5V930.5M1117.5 922.5V926.5M1141.5 922.5V926.5M1164.5 922.5V926.5M1188.5 922.5V926.5M1212.5 922.5V930.5M1235.5 922.5V926.5M1259.5 922.5V926.5M1283.5 922.5V926.5" stroke="#000" stroke-width="1"/>
<text x="856.0" y="944.5" text-anchor="middle" font-size="12" fill="#1e1e1e">10</text>
<text x="974.5" y="944.5" text-anchor="middle" font-size="12" fill="#1e1e1e">15</text>
<text x="1093.1" y="944.5" text-anchor="middle" font-size="12" fill="#1e1e1e">20</text>
<text x="1211.7" y="944.5" text-anchor="middle" font-size="12" fill="#1e1e1e">25</text>
<circle cx="336.9" cy="164" r="4.8" fill="#fff" stroke="#111" stroke-width="1"/>
<circle cx="337" cy="448.8" r="4.8" fill="#fff" stroke="#111" stroke-width="1"/>
<circle cx="339.7" cy="732.5" r="4.8" fill="#fff" stroke="#111" stroke-width="1"/>
<circle cx="849.6" cy="163.3" r="4.8" fill="#fff" stroke="#111" stroke-width="1"/>
<circle cx="854.7" cy="732.5" r="4.8" fill="#fff" stroke="#111" stroke-width="1"/>
</svg>
</body></html>
